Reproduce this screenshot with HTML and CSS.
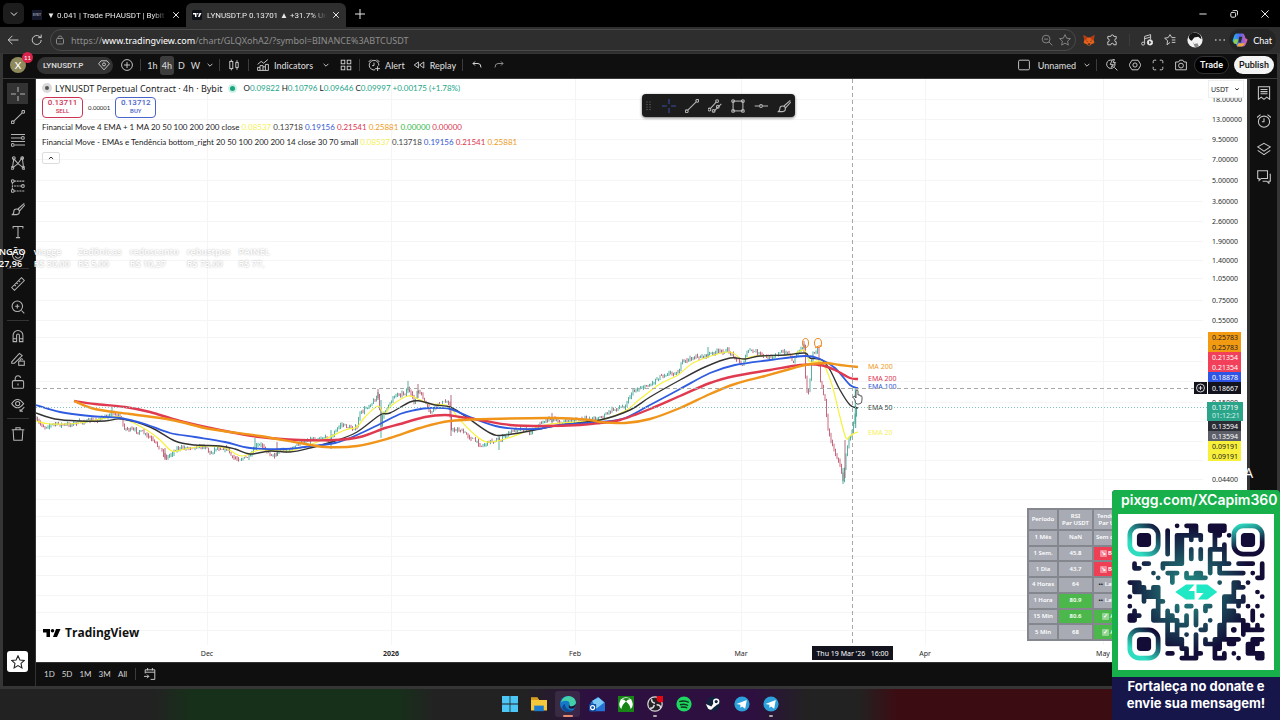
FILE: index.html
```html
<!DOCTYPE html>
<html lang="en">

<head>
    <meta charset="UTF-8">
    <meta name="viewport" content="width=device-width, initial-scale=1.0">
    <title>LYNUSDT.P 0.13701</title>
    <link rel="stylesheet" href="styles.css">
</head>

<body>

    <!-- browser tabs -->
    <header class="tabs">
        <button class="tab-menu" aria-label="Tab actions"><svg class="ico s10" viewBox="0 0 20 20"><path d="M4 7l6 6 6-6"/></svg></button>
        <div class="tab">
            <span class="favicon">BYBIT</span>
            <span class="tab-title">▼ 0.041 | Trade PHAUSDT | Bybit P</span>
            <button class="close" aria-label="Close tab"><svg class="ico s8" viewBox="0 0 20 20"><path d="M3 3l14 14M17 3L3 17"/></svg></button>
        </div>
        <div class="tab active">
            <svg class="s10" viewBox="0 0 20 20"><rect width="20" height="20" rx="3" fill="#0c0e15"/><path d="M2 6h7v8H6V9H2zM15 6h4l-4 8h-3z" fill="#fff"/><circle cx="11.500" cy="7.500" r="1.500" fill="#fff"/></svg>
            <span class="tab-title">LYNUSDT.P 0.13701 ▲ +31.7% Un</span>
            <button class="close" aria-label="Close tab"><svg class="ico s8" viewBox="0 0 20 20"><path d="M3 3l14 14M17 3L3 17"/></svg></button>
        </div>
        <button class="new-tab" aria-label="New tab"><svg class="ico s10" viewBox="0 0 20 20"><path d="M10 0v20M0 10h20"/></svg></button>
        <div class="window-buttons">
            <button aria-label="Minimize"><svg class="ico s8" viewBox="0 0 20 20"><path d="M1 10h18"/></svg></button>
            <button aria-label="Restore"><svg class="ico s8" viewBox="0 0 20 20"><rect x="2" y="6" width="12" height="12" rx="3"/><path d="M6 3q1-2 3-2h6q4 0 4 4v6q0 2-2 3"/></svg></button>
            <button aria-label="Close"><svg class="ico s8" viewBox="0 0 20 20"><path d="M1 1l18 18M19 1L1 19"/></svg></button>
        </div>
    </header>

    <!-- address bar -->
    <nav class="toolbar">
        <button aria-label="Back"><svg class="ico s12" viewBox="0 0 20 20"><path d="M19 10H2M9 3l-7 7 7 7"/></svg></button>
        <button aria-label="Reload"><svg class="ico s12" viewBox="0 0 20 20"><path d="M17 10a7.500 7.500 0 1 1-3-6l3 2M17 1v5h-5"/></svg></button>
        <div class="address">
            <svg class="ico s10 dim" viewBox="0 0 20 20"><rect x="3" y="7" width="14" height="11" rx="2"/><path d="M6 7V5q0-3 4-3t4 3v2M10 12v1"/></svg>
            <span class="url">https://<b>www.tradingview.com</b>/chart/GLQXohA2/?symbol=BINANCE%3ABTCUSDT</span>
            <svg class="ico s12 dim" viewBox="0 0 20 20"><circle cx="8.500" cy="8.500" r="6.500"/><path d="M13 13l6 6M5 8.500h7"/></svg>
            <svg class="ico s12 dim" viewBox="0 0 20 20"><path d="M10 1l2.700 6 6.300.7-4.700 4.300 1.300 6.500L10 15.200l-5.600 3.300 1.300-6.500L1 7.700 7.300 7z"/></svg>
        </div>
        <div class="extensions">
            <svg class="s12" viewBox="0 0 20 20"><path d="M1 2l7 4h4l7-4-1 8 1 5-5 2-2 2H8l-2-2-5-2 1-5z" fill="#e2601c"/><path d="M1 2l7 4-3 4-3 1zM19 2l-7 4 3 4 3 1z" fill="#b63b12"/><path d="M5 11l3 1-1 1zM15 11l-3 1 1 1zM8 16h4v2H8z" fill="#222"/></svg>
            <svg class="ico s12" viewBox="0 0 20 20"><path d="M3 4h5a2.500 2.500 0 1 1 5 0h4v4a2.500 2.500 0 1 0 0 5v5h-4a2.500 2.500 0 1 0-5 0H3v-5a2.500 2.500 0 1 0 0-5z"/></svg>
            <span class="bar"></span>
            <svg class="ico s12" viewBox="0 0 20 20"><path d="M6 16V4l10-3v8M6 8l10-3"/><circle cx="3.500" cy="16" r="2.500"/><circle cx="15" cy="14" r="4.500" fill="#fff"/><path d="M14 12v4l3-2z" stroke="#222"/></svg>
            <svg class="ico s12" viewBox="0 0 20 20"><path d="M10 14l-5 4 1-7-5-4 6-1 3-5 3 5h6M13 10h6M13 14h6"/></svg>
            <svg class="s16" viewBox="0 0 20 20"><circle cx="10" cy="10" r="9.500" fill="#f3f3f3"/><path d="M2 7q1-7 9-6 7 1 7 8l-4-3-5 1-3 4q-3-1-4-4z" fill="#151515"/><path d="M7 12l2 3 4-1 2 4-5 1z" fill="#888"/></svg>
            <svg class="ico s12" viewBox="0 0 20 20"><path d="M2 10h2M9 10h2M16 10h2" stroke-width="2.500"/></svg>
        </div>
        <button class="chat">
            <svg class="s16" viewBox="0 0 20 20"><defs><linearGradient id="cop"><stop offset="0" stop-color="#22b8e8"/><stop offset=".5" stop-color="#5166f5"/><stop offset="1" stop-color="#f05f9a"/></linearGradient></defs><path d="M6 2h7q2 0 3 3l1 3q3 0 2 3l-2 5q-1 2-3 2H8q-3 0-3-3l-1-2q-4 0-3-3l2-6q1-2 3-2z" fill="url(#cop)"/><path d="M2 12l1-3h5l-2 6H5q-4 0-3-3z" fill="#8ccf4f"/><path d="M6 18l2-4h8l-1 2q-1 2-3 2z" fill="#f2a53c"/><path d="M9 6h4l-2 7H8z" fill="#2b2b2b"/></svg>
            Chat
        </button>
    </nav>

    <div class="app">
        <div class="topbar">
            <span class="avatar">X<i>11</i></span>
            <button class="symbol">LYNUSDT.P <svg class="ico s12" viewBox="0 0 20 20"><path d="M5 3h10l4 5-9 10L1 8z"/><circle cx="10" cy="9" r="2.500"/></svg></button>
            <button class="slot" aria-label="Compare"><svg class="ico s12" viewBox="0 0 20 20"><circle cx="10" cy="10" r="9"/><path d="M10 5v10M5 10h10"/></svg></button>
            <span class="bar"></span>
            <div class="intervals">
                <button>1h</button><button class="on">4h</button><button>D</button><button>W</button>
                <button aria-label="More intervals"><svg class="ico s6" viewBox="0 0 20 20"><path d="M2 6l8 8 8-8"/></svg></button>
            </div>
            <span class="bar"></span>
            <button class="slot wide" aria-label="Chart type"><svg class="ico s12" viewBox="0 0 20 20"><rect x="3" y="4" width="5" height="12"/><rect x="13" y="6" width="4" height="8"/><path d="M5.500 1v3M5.500 16v3M15 2v4M15 14v4"/></svg></button>
            <span class="bar"></span>
            <button class="labelled"><svg class="ico s12" viewBox="0 0 20 20"><path d="M1 19V14h4v-3h5v2h4V9h5v10zM1 9l6-5 4 3 7-6M5 14v5M10 13v6M14 13v6"/></svg>Indicators</button>
            <button class="slot" aria-label="Favorite indicators"><svg class="ico s6" viewBox="0 0 20 20"><path d="M2 6l8 8 8-8"/></svg></button>
            <button class="slot" aria-label="Layouts"><svg class="ico s12" viewBox="0 0 20 20"><rect x="2" y="2" width="6" height="6"/><rect x="12" y="2" width="6" height="6"/><rect x="2" y="12" width="6" height="6"/><rect x="12" y="12" width="6" height="6"/></svg></button>
            <span class="bar"></span>
            <button class="labelled"><svg class="ico s12" viewBox="0 0 20 20"><path d="M12 18a8 8 0 1 1 6-7M10 6v5H7M1 5l4-4M15 1l4 4M12 16h8M16 12v8"/></svg>Alert</button>
            <button class="labelled"><svg class="ico s12" viewBox="0 0 20 20"><path d="M9 5v10l-7-5zM18 5v10l-7-5z"/></svg>Replay</button>
            <span class="bar"></span>
            <button class="slot wide" aria-label="Undo"><svg class="ico s10" viewBox="0 0 20 20"><path d="M6 3L2 7l4 4M2 7h10q6 0 6 8"/></svg></button>
            <button class="slot wide dim" aria-label="Redo"><svg class="ico s10" viewBox="0 0 20 20"><path d="M14 3l4 4-4 4M18 7H8q-6 0-6 8"/></svg></button>

            <div class="topbar-right">
                <button class="labelled"><svg class="ico s12" viewBox="0 0 20 20"><rect x="1" y="2" width="18" height="16" rx="2"/></svg>Unnamed <svg class="ico s6" viewBox="0 0 20 20"><path d="M2 6l8 8 8-8"/></svg></button>
                <span class="bar"></span>
                <button class="slot" aria-label="Quick search"><svg class="ico s12" viewBox="0 0 20 20"><path d="M14 14l5 5M15 8a7 7 0 1 1-5-6M11 1L7 9h4l-2 5 7-8h-4l2-5z"/></svg></button>
                <button class="slot" aria-label="Settings"><svg class="ico s12" viewBox="0 0 20 20"><path d="M5 2h10l5 8-5 8H5l-5-8z"/><circle cx="10" cy="10" r="3.500"/></svg></button>
                <button class="slot" aria-label="Fullscreen"><svg class="ico s12" viewBox="0 0 20 20"><path d="M2 7V4q0-2 2-2h3M13 2h3q2 0 2 2v3M18 13v3q0 2-2 2h-3M7 18H4q-2 0-2-2v-3"/></svg></button>
                <button class="slot" aria-label="Snapshot"><svg class="ico s12" viewBox="0 0 20 20"><path d="M1 5h5l2-3h5l2 3h4v13H1z"/><circle cx="10" cy="11" r="4"/></svg></button>
                <button class="pill trade">Trade</button>
                <button class="pill publish">Publish</button>
            </div>
        </div>

        <div class="workspace">
            <aside class="side left">
                <button class="on" aria-label="Cross"><svg class="ico s14" viewBox="0 0 20 20"><path d="M10 0v7M10 13v7M0 10h7M13 10h7"/></svg></button>
                <button aria-label="Trend line"><svg class="ico s14" viewBox="0 0 20 20"><path d="M4 16L16 4"/><circle cx="2.500" cy="17.500" r="2"/><circle cx="17.500" cy="2.500" r="2"/></svg></button>
                <button aria-label="Fib retracement"><svg class="ico s14" viewBox="0 0 20 20"><path d="M0 2h20M0 7h15M0 12h20M5 17h15"/><circle cx="17" cy="7" r="2"/><circle cx="2.500" cy="17" r="2"/></svg></button>
                <button aria-label="Patterns"><svg class="ico s14" viewBox="0 0 20 20"><path d="M2 17L4 4l6 7 6-9 2 15-8-6-8 6"/><circle cx="4" cy="3" r="2"/><circle cx="16" cy="3" r="2"/><circle cx="2" cy="17" r="2"/><circle cx="18" cy="17" r="2"/></svg></button>
                <button aria-label="Forecast"><svg class="ico s14" viewBox="0 0 20 20"><path d="M4 3h16M4 10h12M4 17h16M2 5v10" stroke-dasharray="3 1"/><circle cx="2.500" cy="3" r="2"/><circle cx="2.500" cy="17" r="2"/><circle cx="17" cy="10" r="2"/></svg></button>
                <button aria-label="Brush"><svg class="ico s14" viewBox="0 0 20 20"><path d="M1 18q3 0 3-4t4-4 4 4-4 4zM10 10l9-8M12 13l8-9"/></svg></button>
                <button aria-label="Text"><svg class="ico s14" viewBox="0 0 20 20"><path d="M3 5V2h14v3M10 2v16M7 18h6"/></svg></button>
                <button aria-label="Icons"><svg class="ico s14" viewBox="0 0 20 20"><circle cx="10" cy="10" r="8"/><path d="M6 12q4 5 8 0M7 7v1M13 7v1"/></svg></button>
                <hr>
                <button aria-label="Measure"><svg class="ico s14" viewBox="0 0 20 20"><path d="M1 15L15 1l4 4L5 19zM5 11l2 2M8 8l2 2M11 5l2 2"/></svg></button>
                <button aria-label="Zoom in"><svg class="ico s14" viewBox="0 0 20 20"><circle cx="9" cy="9" r="7.500"/><path d="M15 15l4 4M9 6v6M6 9h6"/></svg></button>
                <hr>
                <button aria-label="Magnet"><svg class="ico s14" viewBox="0 0 20 20"><path d="M3 18V9a7 7 0 0 1 14 0v9h-5V9q0-2-2-2T8 9v9zM3 14h5M12 14h5"/></svg></button>
                <button aria-label="Stay in drawing mode"><svg class="ico s14" viewBox="0 0 20 20"><path d="M1 14L12 2l4 3L5 16H1z"/><rect x="11" y="13" width="8" height="6"/><path d="M13 13v-2q2-3 4 0"/></svg></button>
                <button aria-label="Lock drawings"><svg class="ico s14" viewBox="0 0 20 20"><rect x="2" y="8" width="16" height="11" rx="2"/><path d="M6 8V4q1-3 4-3 3 0 4 3M10 12v3"/></svg></button>
                <button aria-label="Hide drawings"><svg class="ico s14" viewBox="0 0 20 20"><path d="M1 8q8-12 17 0-9 12-17 0z"/><circle cx="9.500" cy="8" r="3"/><path d="M13 19l6-6M13 16v3h4"/></svg></button>
                <hr>
                <button aria-label="Remove"><svg class="ico s14" viewBox="0 0 20 20"><path d="M1 4h18M7 4V1h6v3M3 4l1 15h12l1-15"/></svg></button>
                <button class="star" aria-label="Favorites"><svg class="ico s14" viewBox="0 0 20 20"><path d="M10 1l2.700 6 6.300.7-4.700 4.300 1.300 6.500L10 15.200l-5.600 3.300 1.300-6.500L1 7.700 7.300 7z"/></svg></button>
            </aside>

            <main class="main">
                <section class="chart">
                    <svg class="plot" id="plot" viewBox="36 79 1211 583" preserveAspectRatio="xMaxYMin meet"></svg>

                    <div class="legend">
                        <div class="title-row">
                            <span class="coin"></span>
                            <span class="name">LYNUSDT Perpetual Contract · 4h · Bybit</span>
                            <span class="live"></span>
                            <span class="ohlc">O<b>0.09822</b> H<b>0.10796</b> L<b>0.09646</b> C<b>0.09997</b> <b>+0.00175 (+1.78%)</b></span>
                        </div>
                        <div class="order-row">
                            <button class="sell">0.13711<small>SELL</small></button>
                            <span>0.00001</span>
                            <button class="buy">0.13712<small>BUY</small></button>
                        </div>
                        <p class="study">Financial Move 4 EMA + 1 MA 20 50 100 200 200 close <i class="y">0.08537</i> <i class="k">0.13718</i> <i class="b">0.19156</i> <i class="r">0.21541</i> <i class="o">0.25881</i> <i class="g">0.00000</i> <i class="r">0.00000</i></p>
                        <p class="study">Financial Move - EMAs e Tendência bottom_right 20 50 100 200 200 14 close 30 70 small <i class="y">0.08537</i> <i class="k">0.13718</i> <i class="b">0.19156</i> <i class="r">0.21541</i> <i class="o">0.25881</i></p>
                        <button class="fold" aria-label="Collapse"><svg class="ico s6" viewBox="0 0 20 20"><path d="M3 13l7-6 7 6"/></svg></button>
                    </div>

                    <div class="draw-tools">
                        <svg class="ico s10 grip" viewBox="0 0 20 20"><path d="M7 2h2M13 2h2M7 7h2M13 7h2M7 12h2M13 12h2M7 17h2M13 17h2"/></svg>
                        <button aria-label="Cross"><svg class="ico s14 blue" viewBox="0 0 20 20"><path d="M10 0v7M10 13v7M0 10h7M13 10h7"/></svg></button>
                        <button aria-label="Trend line"><svg class="ico s14" viewBox="0 0 20 20"><path d="M4 16L16 4"/><circle cx="2.500" cy="17.500" r="2"/><circle cx="17.500" cy="2.500" r="2"/></svg></button>
                        <button aria-label="Parallel channel"><svg class="ico s14" viewBox="0 0 20 20"><path d="M3 14L12 4M8 18l11-11"/><circle cx="2" cy="15" r="2"/><circle cx="13" cy="3" r="2"/><circle cx="8" cy="17" r="2"/><circle cx="14" cy="11" r="2"/></svg></button>
                        <button aria-label="Rectangle"><svg class="ico s14" viewBox="0 0 20 20"><rect x="3" y="3" width="14" height="14"/><circle cx="3" cy="3" r="2"/><circle cx="17" cy="3" r="2"/><circle cx="3" cy="17" r="2"/><circle cx="17" cy="17" r="2"/></svg></button>
                        <button aria-label="Horizontal line"><svg class="ico s14" viewBox="0 0 20 20"><path d="M1 10h7M12 10h8"/><circle cx="10" cy="10" r="2"/></svg></button>
                        <button aria-label="Brush"><svg class="ico s14" viewBox="0 0 20 20"><path d="M1 18q3 0 3-4t4-4 4 4-4 4zM10 10l9-8M12 13l8-9"/></svg></button>
                    </div>

                    <label class="currency"><select aria-label="Currency"><option>USDT</option></select><svg class="ico s6" viewBox="0 0 20 20"><path d="M4 8l6 5 6-5"/></svg></label>

                    <table class="trend">
                        <tr><th>Período</th><th>RSI<br>Par USDT</th><th>Tendência<br>Par USDT</th><th>RSI<br>Par BTC</th><th>Tendência<br>Par BTC</th></tr>
                        <tr><td>1 Mês</td><td>NaN</td><td>Sem dados</td><td>-</td><td>-</td></tr>
                        <tr><td>1 Sem.</td><td>45.8</td><td class="down"><span class="mark">↘</span> Baixa</td><td>-</td><td>-</td></tr>
                        <tr><td>1 Dia</td><td>43.7</td><td class="down"><span class="mark">↘</span> Baixa</td><td>-</td><td>-</td></tr>
                        <tr><td>4 Horas</td><td>64</td><td><span class="eyes">••</span> Lateral</td><td>-</td><td>-</td></tr>
                        <tr><td>1 Hora</td><td class="up">80.9</td><td><span class="eyes">••</span> Lateral</td><td>-</td><td>-</td></tr>
                        <tr><td>15 Min</td><td class="up">80.6</td><td class="up"><span class="mark">✓</span> Alta</td><td>-</td><td>-</td></tr>
                        <tr><td>5 Min</td><td>68</td><td class="up"><span class="mark">✓</span> Alta</td><td>-</td><td>-</td></tr>
                    </table>

                    <div class="brand"><svg viewBox="0 0 36 20"><path d="M0 2h14v16H7V9H0zM26 2h9l-7 16h-8z"/><circle cx="19" cy="5.500" r="3.500"/></svg>TradingView</div>
                </section>

                <footer class="ranges">
                    <button>1D</button><button>5D</button><button>1M</button><button>3M</button><button>All</button>
                    <span class="bar"></span>
                    <button aria-label="Go to"><svg class="ico s12" viewBox="0 0 20 20"><path d="M2 9V3h16v16h-7M2 7h16M6 0v4M14 0v4M0 14h8M5 11l3 3-3 3"/></svg></button>
                </footer>
            </main>

            <aside class="side right">
                <button aria-label="Watchlist"><svg class="ico s14" viewBox="0 0 20 20"><path d="M2 1h16v18l-4-3-4 3-4-3-4 3zM5 5h10M5 8h10M5 11h10"/></svg></button>
                <button aria-label="Alerts"><svg class="ico s14" viewBox="0 0 20 20"><circle cx="10" cy="11" r="8"/><path d="M10 6v5H7M0 5l5-4M15 1l5 4"/></svg></button>
                <button aria-label="Object tree"><svg class="ico s14" viewBox="0 0 20 20"><path d="M10 2l9 5-9 6-9-6zM1 12l9 6 9-6"/></svg></button>
                <button aria-label="Chats"><svg class="ico s14" viewBox="0 0 20 20"><path d="M1 1h14v11H6l-3 3v-3H1zM18 6h1v10h-2v3l-3-3H8"/></svg></button>
            </aside>
        </div>
    </div>

    <!-- taskbar -->
    <div class="taskbar">
        <button aria-label="Start"><svg class="s16" viewBox="0 0 20 20"><path d="M0 0h9.500v9.500H0zM10.500 0H20v9.500h-9.500zM0 10.500h9.500V20H0zM10.500 10.500H20V20h-9.500z" fill="#4cc6f4"/></svg></button>
        <button aria-label="Files"><svg class="s16" viewBox="0 0 20 20"><path d="M0 2h8l2 3h10v13H0z" fill="#f5c83b"/><path d="M4 12h12v7H4z" fill="#1d7bd0"/><path d="M0 2h8l2 3H0z" fill="#d79b1e"/></svg></button>
        <button class="on" aria-label="Edge"><svg class="s16" viewBox="0 0 20 20"><circle cx="10" cy="10" r="10" fill="#1578c8"/><path d="M1 8Q4 0 11 0q8 1 9 8-1 5-6 5-3 0-2-3 0-4-5-4-4 0-6 2z" fill="#45d0a8"/><path d="M6 10q1 8 10 8-8 5-13-2-1-5 3-6z" fill="#0c4a92"/><path d="M12 10q-1 3 2 3t6-3q0 6-6 6-5-1-2-6z" fill="#1f1b30"/></svg></button>
        <button aria-label="Mail"><svg class="s16" viewBox="0 0 20 20"><path d="M2 8l9-7 9 7v11H2z" fill="#2472d6"/><path d="M4 6l8-4 7 6-10 8z" fill="#7cc9f6"/><rect x="0" y="10" width="9" height="9" rx="1" fill="#0c4fa5"/><circle cx="4.500" cy="14.500" r="2.500" fill="none" stroke="#fff" stroke-width="1.500"/></svg></button>
        <button aria-label="Xbox"><svg class="s16" viewBox="0 0 20 20"><rect width="20" height="20" fill="#168516"/><circle cx="10" cy="10" r="8.500" fill="#fff"/><path d="M5 4q3 0 5 3 2-3 5-3-3-3-10 0zM4 17q1-6 6-10 5 4 6 10-6 4-12 0z" fill="#168516"/></svg></button>
        <button class="run" aria-label="Recorder"><svg class="s16" viewBox="0 0 20 20"><circle cx="10" cy="10" r="9" fill="#242127" stroke="#ddd" stroke-width="1.500"/><path d="M10 9q-5-1-4-5M9 11q-1 5-5 4M12 11q5 0 5 4" fill="none" stroke="#ddd" stroke-width="2"/><circle cx="17" cy="3" r="5" fill="#e30613"/></svg></button>
        <button aria-label="Spotify"><svg class="s16" viewBox="0 0 20 20"><circle cx="10" cy="10" r="9.500" fill="#1ed760"/><path d="M4 7q7-2 12 1M5 11q6-2 10 1M6 14q5-1 8 1" fill="none" stroke="#10331c" stroke-width="1.800"/></svg></button>
        <button aria-label="Steam"><svg class="s16" viewBox="0 0 20 20"><circle cx="10" cy="10" r="9" fill="#10233f"/><circle cx="14" cy="7" r="4" fill="#fff"/><path d="M1 10l7 3 4-6 3 4-5 4q-2 4-6 1z" fill="#fff"/><circle cx="14" cy="7" r="2" fill="#10233f"/></svg></button>
        <button aria-label="Telegram"><svg class="s16" viewBox="0 0 20 20"><circle cx="10" cy="10" r="9.500" fill="#2ba0da"/><path d="M3 10l13-5-2 11-4-3-2 2v-4z" fill="#fff"/></svg></button>
        <button class="run" aria-label="Telegram"><svg class="s16" viewBox="0 0 20 20"><circle cx="10" cy="10" r="9.500" fill="#2ba0da"/><path d="M3 10l13-5-2 11-4-3-2 2v-4z" fill="#fff"/></svg></button>
    </div>

    <!-- stream overlays -->
    <div class="ticker">
        <div class="solid">NGÃO<br>27,96</div>
        <div>viagge<br>R$ 30,00</div>
        <div>Zedônicas<br>R$ 5,00</div>
        <div>redoscanto<br>R$ 10,27</div>
        <div>rebustpos<br>R$ 73,00</div>
        <div>PAINEL<br>R$ 77,</div>
    </div>
    <div class="stray">A</div>
    <div class="donate">
        <div class="donate-top">
            <p>pixgg.com/XCapim360</p>
            <svg class="qr" id="qr" viewBox="-2 -2 33 33"></svg>
        </div>
        <p class="donate-text">Fortaleça no donate e envie sua mensagem!</p>
    </div>

    <script src="script.js"></script>
</body>

</html>
```
FILE: styles.css
```css
* {
    box-sizing: border-box;
}

body {
    margin: 0;
    height: 100vh;
    display: flex;
    flex-direction: column;
    overflow: hidden;
    background: #000;
    color: #d6d6d6;
    font-family: Lato, "Noto Sans", sans-serif;
    font-size: 9px;
    position: relative;
}

button {
    display: flex;
    align-items: center;
    justify-content: center;
    flex: none;
    padding: 0;
    border: 0;
    background: none;
    color: inherit;
    font: inherit;
}

p {
    margin: 0;
}

svg {
    flex: none;
    display: block;
}

.ico {
    fill: none;
    stroke: currentColor;
    stroke-width: 1.5;
}

.s6 { width: 6px; height: 6px; stroke-width: 3; }
.s8 { width: 8px; height: 8px; stroke-width: 2.5; }
.s10 { width: 10px; height: 10px; stroke-width: 2; }
.s12 { width: 12px; height: 12px; }
.s14 { width: 14px; height: 14px; }
.s16 { width: 16px; height: 16px; }

.dim {
    color: #8a8a8a;
}

.bar {
    flex: none;
    width: 1px;
    height: 12px;
    background: #3c3c3c;
}

/* tabs */
.tabs {
    flex: none;
    display: flex;
    height: 27px;
    align-items: center;
    color: #e8e8e8;
}

.tab-menu {
    width: 21px;
    height: 21px;
    margin: 0 2px 0 3px;
    border-radius: 5px;
    background: #1d1d1d;
}

.tab {
    display: flex;
    align-items: center;
    gap: 5px;
    width: 160px;
    height: 24px;
    padding: 0 6px;
    align-self: flex-end;
}

.tab.active {
    background: #2e2e2e;
    border-radius: 6px 6px 0 0;
}

.tab-title {
    flex: 1;
    overflow: hidden;
    white-space: nowrap;
    font-family: Roboto, sans-serif;
    font-size: 8px;
    -webkit-mask-image: linear-gradient(90deg, #000 88%, transparent);
    mask-image: linear-gradient(90deg, #000 88%, transparent);
}

.favicon {
    width: 10px;
    height: 10px;
    overflow: hidden;
    background: #15192b;
    color: #c8cdd8;
    font-size: 3px;
    line-height: 10px;
    text-align: center;
}

.new-tab {
    width: 28px;
}

.window-buttons {
    display: flex;
    margin-left: auto;
}

.window-buttons button {
    width: 31px;
    height: 20px;
}

/* address bar */
.toolbar {
    flex: none;
    display: flex;
    align-items: center;
    gap: 12px;
    height: 26px;
    padding: 0 4px 0 7px;
    background: #2e2e2e;
    color: #d6d6d6;
}

.address {
    flex: 1;
    display: flex;
    align-items: center;
    gap: 6px;
    height: 22px;
    padding: 0 4px;
    border: 1px solid #4a4a4a;
    border-radius: 11px;
    margin-left: -5px;
    font-family: "Noto Sans", sans-serif;
}

.url {
    flex: 1;
    color: #8f8f8f;
}

.url b {
    color: #fff;
    font-weight: 400;
}

.extensions {
    display: flex;
    align-items: center;
    gap: 11px;
    margin-left: -5px;
}

.chat {
    gap: 5px;
    height: 22px;
    padding: 0 4px 0 3px;
    margin-left: -9px;
    border-radius: 11px;
    background: #252525;
    color: #fff;
}

/* trading app */
.app {
    flex: 1;
    min-height: 0;
    display: flex;
    flex-direction: column;
    border: 3px solid #353535;
    border-top-width: 1px;
    background: #0f0f0f;
}

.topbar {
    flex: none;
    display: flex;
    align-items: center;
    height: 25px;
    padding-bottom: 2px;
    border-bottom: 1px solid #3a3a3a;
    font-weight: 500;
}

.topbar .bar {
    margin: 0 3px;
}

.avatar {
    flex: none;
    position: relative;
    width: 16px;
    height: 16px;
    margin: 0 11px 0 7px;
    border-radius: 50%;
    background: #8f8a5b;
    color: #fff;
    font-size: 10px;
    line-height: 16px;
    text-align: center;
}

.avatar i {
    position: absolute;
    top: -5px;
    right: -7px;
    width: 11px;
    height: 11px;
    border-radius: 50%;
    background: #d8234b;
    font-size: 6px;
    font-style: normal;
    line-height: 11px;
}

.symbol {
    justify-content: space-between;
    width: 76px;
    height: 17px;
    padding: 0 3px 0 6px;
    margin-right: 4px;
    border-radius: 9px;
    background: #333;
    font-family: Roboto, sans-serif;
    font-size: 8px;
    font-weight: 600;
}

.slot {
    width: 20px;
    height: 20px;
}

.slot.wide {
    width: 22px;
}

.topbar-right .slot {
    width: 23px;
}

.intervals {
    display: flex;
    gap: 1px;
    padding-left: 2px;
}

.intervals button {
    width: 13px;
    height: 19px;
    border-radius: 3px;
}

.intervals .on {
    background: #3d3d3d;
    width: 14px;
}

.labelled {
    gap: 5px;
    height: 20px;
    padding: 0 3px 0 5px;
}

.topbar-right {
    display: flex;
    align-items: center;
    margin-left: auto;
    padding-right: 3px;
}

.topbar-right .labelled {
    gap: 8px;
}

.pill {
    height: 18px;
    border-radius: 9px;
    padding: 0 5px;
    margin-left: 5px;
    color: #fff;
    font-family: Roboto, sans-serif;
    font-weight: 500;
}

.trade {
    background: #000;
    border: 1px solid #333;
    margin-left: 2px;
}

.publish {
    background: #f4f4f4;
    color: #111;
}

.workspace {
    flex: 1;
    min-height: 0;
    display: flex;
}

.side {
    flex: none;
    display: flex;
    flex-direction: column;
    align-items: center;
    color: #b4b4b4;
}

.side.left {
    width: 33px;
    padding: 3px 3px 14px 0;
    border-right: 1px solid #333;
}

.side.right {
    width: 30px;
    border-left: 3px solid #333;
    color: #c8c8c8;
}

.side button {
    width: 21px;
    height: 23px;
}

.side .on {
    background: #333;
    background-clip: content-box;
    padding: 1px 0;
}

.side.right button {
    height: 28px;
}

.side hr {
    width: 22px;
    height: 1px;
    margin: 2px 0 3px;
    border: 0;
    background: #333;
}

.side .star {
    height: 21px;
    margin-top: auto;
    border-radius: 3px;
    background: #fff;
    color: #222;
}

.main {
    flex: 1;
    min-width: 0;
    display: flex;
    flex-direction: column;
}

.chart {
    flex: 1;
    min-height: 0;
    position: relative;
    overflow: hidden;
    background: #fff;
    color: #1c1c1c;
}

.plot {
    width: 100%;
    height: 100%;
    font-family: "Noto Sans", sans-serif;
    font-size: 7px;
}

.plot .grid {
    stroke: #f5f5f5;
}

.plot .cross {
    stroke: #a8a8a8;
    stroke-dasharray: 4 3;
}

.plot .axis {
    fill: #2a2a2a;
}

.ranges {
    flex: none;
    display: flex;
    align-items: center;
    gap: 7px;
    height: 24px;
    padding: 0 8px 1px;
    border-top: 1px solid #333;
    font-size: 8px;
}

.ranges button {
    min-width: 10px;
}

.ranges .bar {
    margin: 0 1px 0 0;
}

/* legend over the chart */
.legend {
    position: absolute;
    top: 2px;
    left: 6px;
}

.title-row,
.order-row {
    display: flex;
    align-items: center;
}

.title-row {
    height: 14px;
}

.name {
    font: 9px "Noto Sans", sans-serif;
}

.coin {
    width: 10px;
    height: 10px;
    margin-right: 3px;
    border: 3px solid #d9d9d9;
    border-radius: 50%;
    background: #555;
}

.live {
    width: 9px;
    height: 9px;
    margin: 0 6px;
    border: 2px solid #cdeee4;
    border-radius: 50%;
    background: #17a67e;
}

.ohlc {
    font-size: 8px;
}

.ohlc b {
    color: #22a586;
    font-weight: 400;
}

.order-row {
    gap: 5px;
    height: 22px;
    margin: 1px 0 2px;
    font-size: 6px;
}

.order-row button {
    flex-direction: column;
    width: 41px;
    height: 21px;
    border: 1px solid;
    border-radius: 4px;
    font-family: Roboto, sans-serif;
    font-size: 8px;
    font-weight: 500;
    line-height: 8px;
}

.order-row small {
    font-size: 6px;
}

.sell { color: #cc3355; }
.buy { color: #4a63c8; }

.study {
    font-size: 8px;
    line-height: 15px;
    white-space: nowrap;
}

.study i {
    font-style: normal;
}

.y { color: #f5ef5a; }
.k { color: #444; }
.b { color: #3358d4; }
.r { color: #dc3450; }
.o { color: #ee9a1c; }
.g { color: #35b84a; }

.fold {
    width: 18px;
    height: 12px;
    margin-top: 2px;
    border: 1px solid #ddd;
    border-radius: 2px;
}

.draw-tools {
    position: absolute;
    top: 15px;
    left: 50%;
    display: flex;
    align-items: center;
    gap: 9px;
    height: 23px;
    padding: 0 4px 0 1px;
    border-radius: 4px;
    background: #1c1c1c;
    color: #b8b8b8;
    box-shadow: 0 1px 3px #0008;
}

.draw-tools .blue { color: #3a4ea8; }
.draw-tools .grip { color: #777; }

.currency {
    position: absolute;
    top: 1px;
    right: 3px;
    display: flex;
    align-items: center;
    width: 36px;
    height: 18px;
    border: 1px solid #eee;
    background: #fff;
}

.currency select {
    flex: 1;
    min-width: 0;
    padding: 0 2px;
    border: 0;
    appearance: none;
    background: none;
    color: inherit;
    font: 7px "Noto Sans", sans-serif;
}

.currency svg {
    margin-right: 3px;
}

.trend {
    position: absolute;
    right: 40px;
    bottom: 21px;
    width: 180px;
    height: 133px;
    table-layout: fixed;
    border-spacing: 2px;
    background: #85878f;
    color: #fff;
    font-family: "Noto Sans", sans-serif;
    font-size: 6px;
    font-weight: 600;
    line-height: 7px;
    text-align: center;
}

.trend th,
.trend td {
    padding: 0;
    overflow: hidden;
    white-space: nowrap;
    background: #a8abb4;
}

.trend th {
    height: 19px;
    font-weight: 600;
}

.trend th:first-child {
    width: 28px;
}

.trend th:nth-child(2) {
    width: 33px;
}

.trend .up { background: #4cb84c; }
.trend .down { background: #ee3f55; }

.mark {
    display: inline-block;
    width: 7px;
    border-radius: 1px;
    background: #ffffff66;
}

.eyes {
    color: #222;
}

.brand {
    position: absolute;
    left: 7px;
    bottom: 21px;
    display: flex;
    align-items: center;
    gap: 4px;
    font: 700 12px "Open Sans", sans-serif;
    color: #111;
}

.brand svg {
    width: 18px;
    height: 10px;
}

/* taskbar */
.taskbar {
    flex: none;
    display: flex;
    align-items: center;
    justify-content: center;
    gap: 4px;
    height: 31px;
    padding-bottom: 1px;
    background: linear-gradient(90deg, #222 12%, #17301a 15%, #17301a 31%, #222 34%, #222 41%, #2d1040 46%, #2d1040 59%, #222 63%, #222 67%, #3b0d13 70%, #3b0d13);
}

.taskbar button {
    position: relative;
    width: 25px;
    height: 26px;
}

.taskbar .on {
    border-radius: 3px;
    background: #ffffff14;
}

.taskbar .on::after,
.taskbar .run::after {
    content: "";
    position: absolute;
    bottom: 0;
    width: 4px;
    height: 2px;
    border-radius: 1px;
    background: #aaa;
}

.taskbar .on::after {
    width: 10px;
    background: #e88a72;
}

/* stream overlays */
.ticker {
    position: absolute;
    top: 246px;
    left: -1px;
    display: flex;
    gap: 8px;
    color: #fff;
    font: 600 9px/12px "Open Sans", sans-serif;
    text-shadow: 0 0 2px #0005;
}

.ticker .solid {
    text-shadow: none;
}

.stray {
    position: absolute;
    top: 464px;
    right: 27px;
    color: #fff;
    font: 14px/18px "Open Sans", sans-serif;
}

.donate {
    position: absolute;
    right: 0;
    bottom: 0;
    width: 168px;
    border-radius: 4px 4px 0 0;
    overflow: hidden;
    background: #16164a;
    color: #fff;
    font-family: Inter, sans-serif;
    font-weight: 600;
}

.donate-top {
    padding: 0 6px 7px;
    background: #17b04b;
    font-size: 14px;
    line-height: 20px;
    white-space: nowrap;
}

.donate-top p {
    padding: 0 0 4px 3px;
}

.qr {
    width: 100%;
    background: #fff;
}

.donate-text {
    height: 43px;
    padding: 1px 10px 0;
    font-size: 13px;
    font-weight: 700;
    line-height: 17px;
    text-align: center;
}
```
FILE: script.js
```javascript
const plot = document.getElementById('plot');
let out = '';

function line(x1, y1, x2, y2, cls) {
    return `<line x1="${x1}" y1="${y1}" x2="${x2}" y2="${y2}" class="${cls}"/>`;
}

// grid and price scale
const prices = [
    ['18.00000', 99], ['13.00000', 119], ['9.50000', 139], ['7.00000', 159], ['5.00000', 180],
    ['3.60000', 201], ['2.60000', 221], ['1.90000', 241], ['1.40000', 260], ['1.05000', 278],
    ['0.75000', 300], ['0.55000', 320], ['', 337], ['', 361], ['', 381], ['0.15000', 402], ['', 421],
    ['', 441], ['', 460], ['0.04400', 479], ['', 499], ['', 516], ['', 536], ['', 556], ['', 575], ['', 595], ['', 612], ['', 630]
];
for (const [label, y] of prices) {
    out += line(36, y + 0.5, 1203, y + 0.5, 'grid');
    if (label) out += `<text class="axis" x="1212" y="${y + 3}">${label}</text>`;
}

const months = [['Dec', 207], ['2026', 391], ['Feb', 575], ['Mar', 741], ['Apr', 925], ['May', 1103]];
for (const [label, x] of months) {
    out += line(x + 0.5, 79, x + 0.5, 645, 'grid');
    out += `<text class="axis" x="${x}" y="656" text-anchor="middle" font-weight="${label === '2026' ? 700 : 400}">${label}</text>`;
}

// moving averages
function smooth(p) {
    let d = `M${p[0]}`;
    for (let i = 0; i < p.length - 1; i++) {
        const a = p[i - 1] || p[i], b = p[i], c = p[i + 1], e = p[i + 2] || c;
        d += `C${b[0] + (c[0] - a[0]) / 6} ${b[1] + (c[1] - a[1]) / 6} ${c[0] - (e[0] - b[0]) / 6} ${c[1] - (e[1] - b[1]) / 6} ${c[0]} ${c[1]}`;
    }
    return d;
}

// candles
const path = [
    [36, 420], [44, 427], [54, 424], [66, 425], [80, 422], [95, 420], [105, 418], [112, 412], [121, 418], [124, 428],
    [132, 430], [142, 432], [150, 438], [160, 448], [166, 458], [170, 455], [176, 449], [184, 448], [196, 447],
    [206, 446], [210, 454], [216, 448], [228, 449], [232, 458], [240, 459], [250, 457], [256, 446], [262, 445],
    [268, 452], [274, 456], [280, 450], [290, 450], [300, 443], [312, 439], [325, 438], [330, 440], [335, 432],
    [341, 424], [350, 428], [357, 428], [359, 415], [366, 408], [375, 400], [378, 394], [381, 425], [384, 412],
    [390, 404], [394, 395], [405, 393], [408, 388], [414, 402], [418, 390], [424, 400], [430, 413], [440, 403],
    [449, 402], [451, 430], [460, 430], [470, 437], [482, 446], [490, 441], [500, 440], [510, 432], [520, 428],
    [530, 432], [540, 424], [550, 418], [560, 423], [575, 420], [590, 419], [602, 417], [612, 410], [625, 406],
    [632, 392], [640, 388], [650, 385], [660, 376], [670, 373], [678, 373], [682, 362], [692, 358], [705, 356],
    [716, 352], [728, 351], [735, 357], [742, 366], [748, 350], [756, 352], [768, 358], [780, 353], [788, 352],
    [793, 362], [797, 352], [804, 345], [806, 385], [808, 397], [811, 370], [812, 355], [818, 350], [820, 380],
    [825, 400], [828, 430], [834, 450], [840, 465], [843, 480], [846, 455], [849, 440], [853, 428], [856, 408]
];

function priceAt(x) {
    for (let i = 1; i < path.length; i++) {
        if (x <= path[i][0]) {
            const [x0, y0] = path[i - 1];
            const [x1, y1] = path[i];
            return y0 + (y1 - y0) * (x - x0) / (x1 - x0);
        }
    }
    return path[path.length - 1][1];
}

let seed = 7;
function rnd() {
    seed = (seed * 16807) % 2147483647;
    return seed / 2147483647;
}

const spikes = [[378, 389, 400], [408, 381, 393], [418, 384, 398], [381, 400, 438], [451, 395, 436], [255, 438, 450],
    [277, 442, 456], [112, 407, 417], [165, 448, 460], [499, 436, 450], [552, 413, 424], [708, 347, 358], [804, 341, 352], [843, 468, 484], [845, 440, 478], [331, 430, 449]];

let prev = priceAt(36);
for (let x = 36; x < 857; x += 1.5) {
    const y = priceAt(x) + (rnd() - 0.5) * 3;
    const color = y < prev ? '#2a9d8a' : '#b8405c';
    const top = Math.min(y, prev), bottom = Math.max(y, prev);
    out += `<path d="M${x} ${top - rnd() * 2.5}V${bottom + rnd() * 2.5}" stroke="${color}" opacity="0.8"/>`;
    prev = y;
}
spikes.forEach(([x, a, b], i) => {
    out += `<path d="M${x} ${a}V${b}" stroke="${i % 2 ? '#2a9d8a' : '#a04c60'}" opacity="0.8"/>`;
});
out += '<path d="M855.500 428V389" stroke="#2a9d8a" stroke-width="1.500" opacity="0.7"/>';

const averages = [
    ['#f7f13c', 1.2, [[36, 421], [50, 424], [80, 423], [112, 417], [122, 418], [145, 429], [160, 440], [172, 451], [185, 449], [206, 446], [225, 448], [242, 456], [260, 450], [290, 451], [325, 439], [345, 430], [357, 427], [365, 417], [378, 406], [384, 414], [392, 405], [408, 396], [418, 399], [430, 404], [448, 406], [460, 420], [475, 435], [487, 442], [505, 439], [525, 432], [550, 424], [600, 420], [625, 411], [640, 399], [660, 384], [678, 375], [695, 362], [728, 352], [742, 359], [755, 356], [790, 355], [804, 350], [810, 362], [822, 362], [832, 385], [840, 417], [846, 438], [850, 436], [855, 433], [858, 432]]],
    ['#333', 1.4, [[36, 413], [55, 419], [80, 421], [105, 421], [122, 419], [150, 427], [175, 441], [195, 445], [220, 446], [235, 449], [250, 454], [270, 451], [290, 452], [310, 448], [335, 441], [357, 432], [380, 415], [390, 413], [410, 402], [420, 401], [435, 405], [450, 407], [465, 416], [490, 433], [505, 435], [540, 429], [560, 425], [600, 420], [630, 410], [650, 397], [680, 380], [705, 367], [730, 358], [745, 359], [760, 356], [785, 355], [805, 353], [810, 358], [822, 360], [830, 370], [840, 390], [850, 405], [858, 408]]],
    ['#2f5be0', 1.8, [[36, 405], [60, 412], [90, 416], [120, 418], [145, 424], [170, 433], [195, 437], [225, 442], [250, 448], [285, 449], [305, 447], [335, 443], [357, 435], [380, 424], [400, 414], [415, 410], [430, 408], [450, 409], [470, 417], [500, 427], [535, 429], [560, 425], [600, 422], [625, 418], [650, 405], [680, 389], [710, 373], [735, 365], [770, 360], [805, 356], [820, 359], [835, 368], [850, 385], [858, 388]]],
    ['#e03a50', 2.4, [[74, 401], [95, 404], [125, 407], [150, 412], [180, 421], [220, 430], [260, 437], [300, 440], [335, 440], [360, 437], [385, 428], [400, 424], [425, 417], [445, 415], [460, 417], [480, 420], [510, 425], [545, 426], [580, 425], [600, 423], [620, 420], [650, 409], [680, 396], [710, 383], [735, 376], [770, 370], [800, 365], [820, 365], [835, 370], [850, 378], [858, 379]]],
    ['#f0951a', 2.4, [[74, 401], [95, 409], [130, 414], [172, 420], [210, 429], [260, 436], [300, 443], [325, 447], [357, 446], [390, 438], [420, 428], [450, 421], [490, 419], [555, 418], [590, 420], [600, 422], [625, 423], [650, 419], [680, 408], [710, 394], [735, 384], [765, 376], [790, 369], [805, 365], [825, 363], [840, 365], [858, 367]]]
];
for (const [color, width, points] of averages) {
    out += `<path d="${smooth(points)}" fill="none" stroke="${color}" stroke-width="${width}"/>`;
}

const names = [['MA 200', 367, '#ee9a1c'], ['EMA 200', 379, '#dc3450'], ['EMA 100', 387, '#3358d4'], ['EMA 50', 408, '#444'], ['EMA 20', 433, '#f5ef5a']];
for (const [name, y, color] of names) {
    out += `<text x="868" y="${y + 2}" fill="${color}">${name}</text>`;
}

// marked tops
out += '<g fill="none" stroke="#f0851a"><ellipse cx="805.500" cy="343" rx="3" ry="4.500"/><ellipse cx="818" cy="343" rx="3.500" ry="4.500"/><path d="M815 348q3-3 7-2"/></g>';

// last price and crosshair
out += '<path d="M36 407.500H1207" stroke="#7fc4b6" stroke-dasharray="1 2"/>';
out += line(36, 388.5, 1194, 388.5, 'cross') + line(852.5, 79, 852.5, 645, 'cross');
out += '<path d="M855 400q-3-3-1-4 1 0 2 2v-7q1-3 2 0v4q2-1 2 1 2-1 2 1v3q0 4-3 4h-2q-2-1-2-4z" fill="#fff" stroke="#333" stroke-width="0.800"/>';

const tags = [
    ['0.25783', 332, 10, '#f39a13', '#222'], ['0.25783', 342, 10, '#f39a13', '#222'],
    ['0.21354', 352, 10, '#f2405a', '#fff'], ['0.21354', 362, 10, '#f2405a', '#fff'],
    ['0.18878', 372, 10, '#2f55e6', '#fff'], ['0.18667', 382, 12, '#12131c', '#fff'],
    ['0.13594', 421, 10, '#2b2d35', '#fff'], ['0.13594', 431, 10, '#5d5f68', '#fff'],
    ['0.09191', 441, 10, '#f8ef3a', '#222'], ['0.09191', 451, 10, '#f8ef3a', '#222']
];
for (const [label, y, h, bg, fg] of tags) {
    out += `<rect x="1208" y="${y}" width="33" height="${h}" fill="${bg}"/><text x="1212" y="${y + h / 2 + 3}" fill="${fg}">${label}</text>`;
}
out += '<rect x="1207" y="402" width="36" height="19" fill="#2aa58a"/><text x="1212" y="410" fill="#fff">0.13719</text><text x="1212" y="418" fill="#d5f0e9">01:12:21</text>';
out += '<rect x="1194" y="382" width="13" height="12" fill="#12131c"/><circle cx="1200.500" cy="388" r="4" fill="none" stroke="#fff" stroke-width="0.800"/><path d="M1198.500 388h4M1200.500 386v4" stroke="#fff" stroke-width="0.800"/>';
out += '<rect x="812" y="646" width="81" height="14" fill="#12131c"/><text x="852.500" y="656" text-anchor="middle" fill="#fff" xml:space="preserve">Thu 19 Mar \'26   16:00</text>';
plot.innerHTML = out;

// QR code, one character per module
const modules = [
    '..........#.###..####........',
    '........#....##..####........',
    '........#.######..##.#.......',
    '........#.##.#.#..#..........',
    '........#.##......#.#........',
    '........#.##.#.#.####........',
    '........#.##.#.#.#..#........',
    '..........##.#.#.#..#........',
    '.#.##..#####.....#####.####.#',
    '.##....#.........#.#........#',
    '.....#..###.#.##.#.######.#.#',
    '......#..#..#####..........##',
    '###......#.........#..##.#...',
    '.###.##...............###....',
    '.######...............#....#.',
    '#..####.............###.#...#',
    '...#..##............#####....',
    '#.....#...#.##..##..#..#.#.#.',
    '.#...##.#.#...#.#...###...#..',
    '###..##.##..#.#.....####..#.#',
    '##...######.#.#..#..#####.#..',
    '........#.###.#.#..##...##.#.',
    '........#.#....##..##...#####',
    '........###.#.#....##...#....',
    '........####..#.#.######..###',
    '........####..#.####.##..###.',
    '...........##.#...##.....##..',
    '........##..#.##..#.#.#..####',
    '...........####...###..#...##'
];
let qr = '<defs><radialGradient id="ink" gradientUnits="userSpaceOnUse" cx="13" cy="14" r="15"><stop offset="0" stop-color="#22968c"/><stop offset="0.45" stop-color="#1d5361"/><stop offset="0.9" stop-color="#120c36"/></radialGradient>' +
    '<linearGradient id="f1" x1="0" y1="1" x2="1" y2="0"><stop offset="0.2" stop-color="#2edcc0"/><stop offset="1" stop-color="#120c36"/></linearGradient>' +
    '<linearGradient id="f2" x1="0" y1="0" x2="0.3" y2="1"><stop offset="0" stop-color="#2edcc0"/><stop offset="0.8" stop-color="#120c36"/></linearGradient>' +
    '<linearGradient id="f3" x1="1" y1="0" x2="0.3" y2="1"><stop offset="0.1" stop-color="#120c36"/><stop offset="0.9" stop-color="#2edcc0"/></linearGradient></defs>';
let ink = '';
modules.forEach((row, r) => {
    for (let c = 0; c < row.length; c++) {
        if (row[c] !== '#') continue;
        ink += `M${c + 0.5} ${r + 0.5}h.01`;
        if (row[c + 1] === '#') ink += `M${c + 0.5} ${r + 0.5}h1`;
        if (modules[r + 1] && modules[r + 1][c] === '#') ink += `M${c + 0.5} ${r + 0.5}v1`;
    }
});
qr += `<path d="${ink}" stroke="url(#ink)" stroke-width="1" stroke-linecap="round"/>`;
[[0, 0, 'f1'], [22, 0, 'f2'], [0, 22, 'f3']].forEach(([x, y, fill]) => {
    qr += `<rect x="${x + 0.5}" y="${y + 0.5}" width="6" height="6" rx="2" fill="none" stroke="url(#${fill})"/><rect x="${x + 2}" y="${y + 2}" width="3" height="3" rx="0.8" fill="#120c36"/>`;
});
qr += '<rect x="21" y="21" width="3" height="3" fill="#fff"/><circle cx="22.500" cy="22.500" r="0.600" fill="#120c36"/>';
qr += '<path d="M10.100 14.500L12.400 12.900H14.200L12.900 14.300H14.200V16.100H12.400zM14.600 12.900H16.900L19 14.500 16.900 16.100H14.900L16.100 14.700H14.600z" fill="#1fe8c4"/>';
document.getElementById('qr').innerHTML = qr;
```
